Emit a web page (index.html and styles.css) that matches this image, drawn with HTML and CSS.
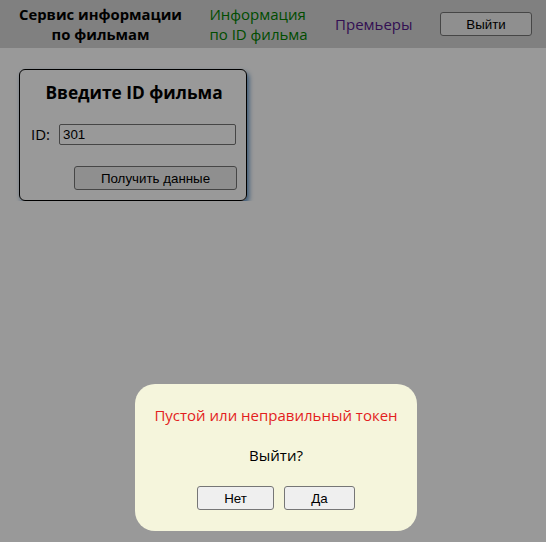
FILE: index.html
```html
<!DOCTYPE html>
<html lang="ru">
<head>
<meta charset="utf-8">
<title>Сервис информации по фильмам</title>
<link rel="stylesheet" href="styles.css">
</head>
<body>
<header class="topbar">
  <div class="brand">Сервис информации<br>по фильмам</div>
  <a class="nav nav-current" href="#">Информация<br>по ID фильма</a>
  <a class="nav nav-visited" href="#">Премьеры</a>
  <button class="btn btn-logout" type="button">Выйти</button>
</header>
<main class="content">
  <section class="card">
    <h2 class="card-title">Введите ID фильма</h2>
    <div class="field">
      <label class="field-label" for="movie-id">ID:</label>
      <input class="field-input" id="movie-id" type="text" value="301">
    </div>
    <div class="card-actions">
      <button class="btn btn-get" type="button">Получить данные</button>
    </div>
  </section>
</main>
<div class="overlay"></div>
<div class="modal">
  <p class="modal-error">Пустой или неправильный токен</p>
  <p class="modal-question">Выйти?</p>
  <div class="modal-actions">
    <button class="btn btn-no" type="button">Нет</button>
    <button class="btn btn-yes" type="button">Да</button>
  </div>
</div>
</body>
</html>
```
FILE: styles.css
```css
html, body {
  margin: 0;
  padding: 0;
  background: #ffffff;
  font-family: "Open Sans", "Noto Sans", sans-serif;
  color: #000;
}

.topbar {
  display: flex;
  align-items: center;
  justify-content: space-between;
  height: 48px;
  padding: 0 14px 0 19px;
  background: #d5d5d5;
}

.brand {
  width: 163px;
  font-weight: 700;
  font-size: 14.8px;
  line-height: 20px;
  text-align: center;
  white-space: nowrap;
}

.nav {
  font-size: 15px;
  line-height: 20px;
  text-decoration: none;
  white-space: nowrap;
}

.nav-current { color: #008000; }
.nav-visited { color: #551a8b; }

.btn {
  font-family: "Liberation Sans", Arial, sans-serif;
  font-size: 13.33px;
  color: #000;
  background: #efefef;
  border: 1px solid #767676;
  border-radius: 3px;
  padding: 0;
  height: 24px;
  box-sizing: border-box;
}

.btn-logout { width: 92px; }

.content {
  padding: 21px 0 0 19px;
}

.card {
  width: 228px;
  box-sizing: border-box;
  border: 1px solid #000;
  border-radius: 6px;
  padding: 11px 9px 10px 11px;
  box-shadow: 2px 3px 5px #5b8fc2;
}

.card-title {
  margin: 0 0 19px;
  font-size: 17.3px;
  line-height: 24px;
  font-weight: 700;
  text-align: center;
  white-space: nowrap;
}

.field {
  display: flex;
  align-items: center;
  gap: 9px;
}

.field-label {
  font-size: 15px;
  line-height: 21px;
}

.field-input {
  width: 177px;
  height: 21px;
  box-sizing: border-box;
  border: 1px solid #767676;
  border-radius: 2px;
  padding: 1px 3px;
  font-family: "Liberation Sans", Arial, sans-serif;
  font-size: 13.33px;
  background: #fff;
  color: #000;
}

.card-actions {
  display: flex;
  justify-content: flex-end;
  margin-top: 21px;
}

.btn-get { width: 163px; }

.overlay {
  position: fixed;
  inset: 0;
  background: rgba(0, 0, 0, 0.4);
}

.modal {
  position: fixed;
  left: 135px;
  top: 384px;
  width: 282px;
  box-sizing: border-box;
  padding: 21px 0 21px;
  background: #f5f5dc;
  border-radius: 20px;
  text-align: center;
}

.modal-error {
  margin: 0 0 20px;
  color: #e31e1e;
  font-size: 15px;
  line-height: 20px;
}

.modal-question {
  margin: 0 0 21px;
  font-size: 15px;
  line-height: 20px;
}

.modal-actions {
  display: flex;
  justify-content: center;
  gap: 10px;
}

.btn-no { width: 77px; }
.btn-yes { width: 71px; }
```
